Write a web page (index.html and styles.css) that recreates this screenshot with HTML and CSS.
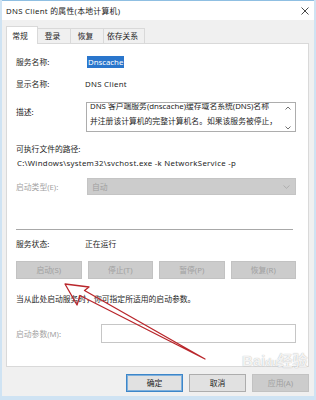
FILE: index.html
```html
<!DOCTYPE html>
<html lang="zh-CN">
<head>
    <meta charset="UTF-8">
    <meta name="viewport" content="width=device-width, initial-scale=1.0">
    <title>DNS Client 的属性(本地计算机)</title>
    <link rel="stylesheet" href="styles.css">
</head>
<body>
    <div class="window">
        <div class="titlebar">
            <span class="title">DNS Client 的属性(本地计算机)</span>
            <svg class="close" width="8" height="8" viewBox="0 0 8 8">
                <path d="M0.5 0.5 L7.5 7.5 M7.5 0.5 L0.5 7.5" stroke="#333" stroke-width="0.9" fill="none"/>
            </svg>
        </div>

        <div class="tabs">
            <div class="tab active">常规</div>
            <div class="tab">登录</div>
            <div class="tab">恢复</div>
            <div class="tab wide">依存关系</div>
        </div>

        <div class="panel">
            <div class="row r-name">
                <span class="label">服务名称:</span>
                <span class="selected">Dnscache</span>
            </div>
            <div class="row r-display">
                <span class="label">显示名称:</span>
                <span class="value-shift latin">DNS Client</span>
            </div>
            <div class="row r-desc">
                <span class="label desc-label">描述:</span>
                <div class="textbox">
                    <div class="textbox-text">
                        <div>DNS 客户端服务(dnscache)缓存域名系统(DNS)名称</div>
                        <div>并注册该计算机的完整计算机名。如果该服务被停止，</div>
                    </div>
                    <div class="scroll">
                        <svg width="6" height="4" viewBox="0 0 6 4"><path d="M0.5 3.5 L3 1 L5.5 3.5" stroke="#606060" stroke-width="0.9" fill="none"/></svg>
                        <svg width="6" height="4" viewBox="0 0 6 4"><path d="M0.5 0.5 L3 3 L5.5 0.5" stroke="#606060" stroke-width="0.9" fill="none"/></svg>
                    </div>
                </div>
            </div>
            <div class="line exec-label">可执行文件的路径:</div>
            <div class="line path latin">C:\Windows\system32\svchost.exe -k NetworkService -p</div>
            <div class="row r-type">
                <span class="label disabled">启动类型(E):</span>
                <div class="combo">
                    <span>自动</span>
                    <svg width="7" height="4" viewBox="0 0 7 4"><path d="M0.5 0.5 L3.5 3.3 L6.5 0.5" stroke="#aaa" stroke-width="0.9" fill="none"/></svg>
                </div>
            </div>
            <div class="sep"></div>
            <div class="row r-status">
                <span class="label">服务状态:</span>
                <span class="value-shift">正在运行</span>
            </div>
            <div class="svc-buttons">
                <div class="btn off">启动(S)</div>
                <div class="btn off">停止(T)</div>
                <div class="btn off">暂停(P)</div>
                <div class="btn off">恢复(R)</div>
            </div>
            <div class="line hint">当从此处启动服务时，你可指定所适用的启动参数。</div>
            <div class="row r-param">
                <span class="label param-label disabled">启动参数(M):</span>
                <div class="input"></div>
            </div>
        </div>

        <div class="actions">
            <div class="btn primary">确定</div>
            <div class="btn normal">取消</div>
            <div class="btn off">应用(A)</div>
        </div>
    </div>

    <!-- red annotation arrow drawn over the dialog -->
    <svg class="arrow" width="316" height="400" viewBox="0 0 316 400">
        <path d="M65 284 L89 287 L84.5 290.5 L205 359 L80 295.5 L77 305 Z" stroke="#b9262b" stroke-width="1.3" fill="none" stroke-linejoin="round"/>
    </svg>

    <div class="watermark">
        <span class="wm-logo">Bai<span class="paw">du</span>经验</span>
    </div>
</body>
</html>
```

FILE: styles.css
```css
body {
    margin: 0;
    padding: 0;
    background: #cfe3f3;
    font-family: "Noto Sans", "Noto Sans CJK SC", sans-serif;
    font-size: 7.8px;
    color: #1e1e1e;
    line-height: 12px;
}
.latin {
    letter-spacing: 0.3px;
}
.window {
    margin-left: 2px;
    width: 312px;
    height: 396px;
    box-sizing: border-box;
    border-top: 1px solid #8fbfe2;
    background: #f0f0f0;
}
.titlebar {
    height: 19px;
    background: #fff;
    display: flex;
    align-items: center;
    justify-content: space-between;
    padding: 0 5px 0 4px;
}
.title {
    color: #222;
    letter-spacing: 0.3px;
}
.tabs {
    display: flex;
    align-items: flex-end;
    height: 17px;
    margin: 6px 0 0 4px;
}
.tab {
    width: 34px;
    height: 15px;
    box-sizing: border-box;
    border: 1px solid #d9d9d9;
    border-bottom: none;
    margin-left: -1px;
    display: flex;
    align-items: center;
    justify-content: center;
    padding-right: 3px;
    background: #f0f0f0;
}
.tab.active {
    width: 32px;
    height: 18px;
    margin-left: 0;
    margin-bottom: -1px;
    background: #fff;
    position: relative;
    z-index: 1;
    padding-right: 4px;
}
.tab.wide {
    width: 42px;
}
.panel {
    width: 303px;
    height: 324px;
    margin-left: 4px;
    box-sizing: border-box;
    border: 1px solid #d9d9d9;
    background: #fff;
    padding: 0 12px 0 9px;
}
.row {
    display: flex;
    align-items: center;
}
.label {
    width: 70px;
    flex: none;
}
.disabled {
    color: #a3a3a3;
}
.line {
    height: 12px;
    white-space: nowrap;
}
.r-name {
    margin-top: 12px;
    height: 12px;
}
.selected {
    margin-left: 1px;
    padding: 0 1px;
    background: #2a76cc;
    color: #fff;
}
.value-shift {
    margin-left: -1px;
}
.r-display {
    margin-top: 10px;
    height: 12px;
}
.r-desc {
    margin-top: 12px;
    align-items: flex-start;
}
.desc-label {
    margin-top: 4px;
}
.textbox {
    width: 210px;
    height: 30px;
    box-sizing: border-box;
    border: 1px solid #adadad;
    display: flex;
    overflow: hidden;
}
.textbox-text {
    flex: 1;
    padding-left: 3px;
    margin-top: -4px;
    line-height: 15px;
    white-space: nowrap;
    overflow: hidden;
}
.scroll {
    width: 14px;
    flex: none;
    display: flex;
    flex-direction: column;
    justify-content: space-between;
    align-items: center;
    padding: 3px 0 1px;
}
.exec-label {
    margin-top: 11px;
}
.path {
    margin-top: 2px;
    margin-left: 1px;
}
.r-type {
    margin-top: 9px;
}
.combo {
    margin-left: 1px;
    width: 209px;
    height: 17px;
    box-sizing: border-box;
    background: #cccccc;
    border: 1px solid #c4c4c4;
    display: flex;
    align-items: center;
    justify-content: space-between;
    padding: 0 5px 0 4px;
    color: #a0a0a0;
}
.sep {
    margin-top: 34px;
    width: 277px;
    height: 1px;
    background: #a8a8a8;
}
.r-status {
    margin-top: 8px;
    height: 12px;
}
.svc-buttons {
    margin-top: 11px;
    display: grid;
    grid-template-columns: repeat(4, 1fr);
    gap: 6px;
}
.btn {
    height: 18px;
    box-sizing: border-box;
    display: flex;
    align-items: center;
    justify-content: center;
}
.btn.off {
    background: #cccccc;
    border: 1px solid #c2c2c2;
    color: #a0a0a0;
}
.btn.normal {
    background: #e1e1e1;
    border: 1px solid #adadad;
}
.btn.primary {
    background: #e1e1e1;
    border: 1px solid #3d86c9;
    box-shadow: inset 0 0 0 1px #7fb0dc;
}
.hint {
    margin-top: 14px;
}
.r-param {
    margin-top: 19px;
}
.param-label {
    width: 85px;
}
.input {
    width: 195px;
    height: 19px;
    box-sizing: border-box;
    border: 1px solid #c6c6c6;
    background: #fff;
}
.actions {
    margin-top: 7px;
    padding-right: 5px;
    display: flex;
    justify-content: flex-end;
    gap: 6px;
}
.actions .btn {
    width: 57px;
}
.arrow {
    position: absolute;
    top: 0;
    left: 0;
    pointer-events: none;
}
.watermark {
    position: absolute;
    left: 242px;
    top: 350px;
    pointer-events: none;
    color: rgba(255, 255, 255, 0.85);
    text-shadow: 0 0 1px rgba(0, 0, 0, 0.35);
}
.wm-logo {
    font-family: "Liberation Sans", "Noto Sans CJK SC", sans-serif;
    font-size: 15px;
    line-height: 22px;
    font-weight: bold;
    white-space: nowrap;
}
.paw {
    font-size: 10px;
}
```
